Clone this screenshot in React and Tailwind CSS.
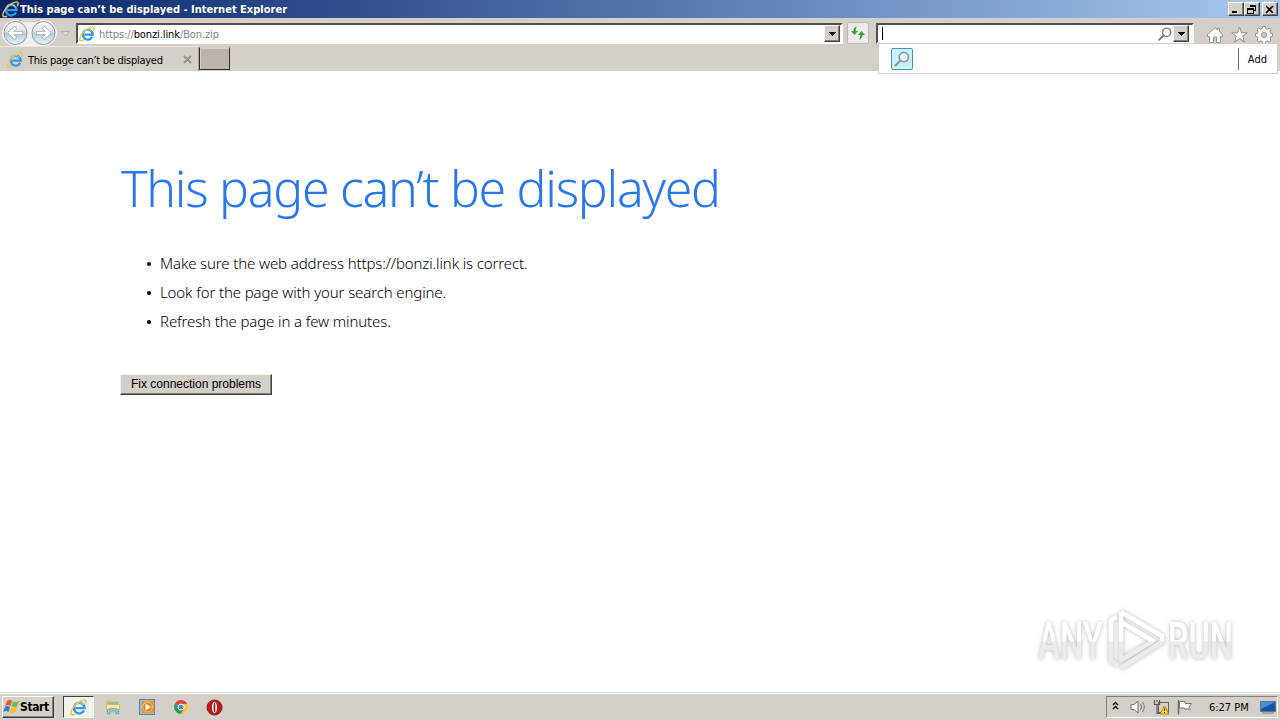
import React from "react";

const UI_FONT = "font-['DejaVu_Sans_Condensed','DejaVu_Sans',sans-serif]";

const IeLogo = ({ size = 16 }) => (
  <svg width={size} height={size} viewBox="0 0 16 16" fill="none" className="shrink-0">
    <path d="M13.200 10.800A5 5 0 1 1 13.700 8.600H5.200" stroke="#2c9be3" strokeWidth="2.300" />
    <path d="M4.400 5.200A5.500 5.500 0 0 1 12.800 5.500" stroke="#86d7fb" strokeWidth="1" />
    <path d="M4.800 13.900C2.800 15.300 1 15.200.8 13.500C.5 10.500 4.200 5.700 8.400 3C11.500 1 14.400.3 15 1.600C15.400 2.400 15 3.600 14.300 4.800" stroke="#efc33c" strokeWidth="1.400" />
  </svg>
);

const Magnifier = ({ size = 14, color = "#858585", fill = "none" }) => (
  <svg width={size} height={size} viewBox="0 0 14 14" fill="none" className="shrink-0">
    <path d="M5.500 8.500L1.300 12.700" stroke={color} strokeWidth="2" strokeLinecap="round" />
    <circle cx="8.600" cy="5.300" r="4.100" fill={fill} stroke={color} strokeWidth="1.500" />
  </svg>
);

const Arrow = () => (
  <svg width="8" height="4" viewBox="0 0 8 4" shapeRendering="crispEdges">
    <path d="M0 0H8L4 4Z" fill="#000" />
  </svg>
);

const DropButton = () => (
  <div className="flex h-[17px] w-4 shrink-0 items-center justify-center border border-t-[#f4f2ee] border-r-[#404040] border-b-[#404040] border-l-[#f4f2ee] bg-[#d4d0c8] shadow-[inset_-1px_-1px_0_#808080]">
    <Arrow />
  </div>
);

const WindowButton = ({ children, className = "" }) => (
  <div className={`flex h-[14px] w-4 items-center justify-center border border-t-white border-r-[#404040] border-b-[#404040] border-l-white bg-[#d4d0c8] shadow-[inset_-1px_-1px_0_#808080] ${className}`}>
    <svg width="12" height="11" viewBox="0 0 12 11" fill="none" stroke="#000" shapeRendering="crispEdges" className="shrink-0">
      {children}
    </svg>
  </div>
);

const NavButtons = () => (
  <svg width="74" height="27" viewBox="0 0 74 27" fill="none" className="shrink-0">
    <defs>
      <linearGradient id="orb" x1="0" y1="0" x2="0" y2="1">
        <stop offset="0" stopColor="#fafcfd" />
        <stop offset=".46" stopColor="#dde1e6" />
        <stop offset=".5" stopColor="#b9c5cf" />
        <stop offset="1" stopColor="#e4fbff" />
      </linearGradient>
    </defs>
    <rect x="2.500" y="1.500" width="54" height="25" rx="12.500" fill="#f1efed" stroke="#faf9f8" />
    <path d="M19 1.500C25 2.500 34 2.500 40 1.500" stroke="#b5b1ae" />
    <circle cx="15.500" cy="14" r="11.500" fill="url(#orb)" stroke="#8f9aa5" />
    <circle cx="43.500" cy="14" r="11.500" fill="url(#orb)" stroke="#8f9aa5" />
    <g strokeLinecap="square">
      <path d="M10 14H21M14.500 9.500L10 14L14.500 18.500" stroke="#9ba9b6" strokeWidth="3.800" />
      <path d="M10 14H21M14.500 9.500L10 14L14.500 18.500" stroke="#fff" strokeWidth="2.600" />
      <path d="M38 14H49M44.500 9.500L49 14L44.500 18.500" stroke="#9ba9b6" strokeWidth="3.800" />
      <path d="M38 14H49M44.500 9.500L49 14L44.500 18.500" stroke="#fff" strokeWidth="2.600" />
    </g>
    <path d="M61.500 12.500H69.500L65.500 17Z" fill="#e0dcd8" stroke="#b5afab" />
  </svg>
);

const CommandIcons = () => (
  <svg width="72" height="20" viewBox="0 0 72 20" fill="#fff" stroke="#928e8b" className="ml-[11px] mt-[6px] shrink-0">
    <path d="M4.500 18.500V12.500H2.500V10.500L10 3.700L12.500 6V4.500H14.500V8L17.500 10.500V12.500H15.500V18.500H11.500V13H8.500V18.500Z" />
    <path d="M34.500 3L36.500 8.800H42.200L37.700 12.200L39.500 18L34.500 14.600L29.500 18L31.300 12.200L26.800 8.800H32.500Z" />
    <path transform="translate(-1 -.5)" d="M58.700 3H61.300L61.800 5L63.500 5.700L65.300 4.600L67 6.300L65.900 8.100L66.600 9.700L68.500 10.200V12.800L66.600 13.300L65.900 15L67 16.800L65.300 18.400L63.500 17.300L61.800 18L61.300 20H58.700L58.200 18L56.500 17.300L54.700 18.400L53 16.700L54.100 15L53.400 13.300L51.500 12.800V10.200L53.400 9.700L54.100 8L53 6.200L54.700 4.600L56.500 5.700L58.200 5Z" />
    <circle cx="59" cy="11" r="2.500" fill="#d4cfc9" />
  </svg>
);

const TitleBar = () => (
  <div className="flex h-[18px] items-center bg-linear-to-r from-[#0a246a] to-[#a6caf0] pl-[2px] pr-[2px]">
    <IeLogo size={17} />
    <span className="ml-px grow whitespace-nowrap pt-[2px] text-[11px] font-bold leading-[16px] tracking-[0.01px] text-white [font-stretch:condensed]">
      This page can’t be displayed - Internet Explorer
    </span>
    <WindowButton><path d="M2 8H7" strokeWidth="2" /></WindowButton>
    <WindowButton>
      <path d="M4.500 2V1.500H9.500V6.500H8M4 2H10M1.500 4.500H7.500V9.500H1.500ZM1 5H8" />
    </WindowButton>
    <WindowButton className="ml-[2px]">
      <path d="M2 2L9 9M9 2L2 9" strokeWidth="1.700" shapeRendering="auto" />
    </WindowButton>
  </div>
);

const AddressRow = () => (
  <div className="flex h-[28px] items-start">
    <div className="pt-[1px]"><NavButtons /></div>
    <div className="ml-[2px] mt-[5px] flex h-[21px] w-[767px] items-center border-2 border-t-[#55504c] border-r-white border-b-white border-l-[#55504c] bg-white">
      <div className="ml-px"><IeLogo size={16} /></div>
      <span className="ml-[4px] grow whitespace-nowrap pt-px text-[11px] leading-none tracking-[-0.1px] text-[#858585] [font-stretch:condensed]">
        https://<span className="text-black">bonzi.link</span>/Bon.zip
      </span>
      <DropButton />
      <div className="w-px" />
    </div>
    <div className="ml-[4px] mt-[4px] flex h-[22px] w-[22px] items-center justify-center rounded-xs border border-[#bdb9b5] bg-[#eeeae9]">
      <svg width="16" height="16" viewBox="0 0 16 16" className="shrink-0" fill="#37a23c">
        <path d="M7.500 1.500C6 2 5.800 3.500 5.800 6H8L4.500 10L1 6H3.500C3.500 3.200 5 1.500 7.500 1.500Z" />
        <path d="M8.500 14.500C10 14 10.200 12.500 10.200 10H8L11.500 6L15 10H12.500C12.500 12.800 11 14.500 8.500 14.500Z" />
      </svg>
    </div>
    <div className="ml-[7px] mt-[5px] flex h-[21px] w-[318px] items-center border-2 border-t-[#55504c] border-r-white border-b-white border-l-[#55504c] bg-white">
      <div className="ml-1 h-[13px] w-px bg-black" />
      <div className="grow" />
      <Magnifier size={14} />
      <div className="ml-px mr-[3px]"><DropButton /></div>
    </div>
    <CommandIcons />
  </div>
);

const TabRow = () => (
  <div className="flex h-[25px] items-start">
    <div className="flex h-[25px] w-[199px] items-center border-t border-r border-t-[#e9e5e1] border-r-[#a7a19d] pl-[7px] pt-px">
      <IeLogo size={16} />
      <span className="ml-[5px] whitespace-nowrap pt-[2px] text-[11px] leading-none tracking-[-0.27px] text-black [font-stretch:condensed]">
        This page can’t be displayed
      </span>
      <svg width="9" height="9" viewBox="0 0 9 9" className="ml-auto mr-[6px]" stroke="#98928e" strokeWidth="1.900">
        <path d="M1 1L8 8M8 1L1 8" />
      </svg>
    </div>
    <div className="mt-px h-[23px] w-[31px] border border-t-[#d4cfc9] border-r-[#302c2a] border-b-[#302c2a] border-l-[#302c2a] bg-[#bbb3ae] shadow-[inset_1px_1px_0_#d6d0cc]" />
  </div>
);

const SearchPopup = () => (
  <div className="absolute left-[878px] top-[43px] flex h-[31px] w-[400px] items-center border border-[#d1cecb] bg-white">
    <div className="ml-3 flex h-[22px] w-[22px] items-center justify-center rounded-xs border border-[#3a9dbd] bg-[#cdf1fc]">
      <Magnifier size={16} color="#8c9aaa" fill="#e3f8ff" />
    </div>
    <div className="ml-auto h-[22px] w-px bg-[#6f6f6f]" />
    <span className="ml-[9px] mr-[10px] pt-[2px] text-[11px] leading-none text-black [font-stretch:condensed]">Add</span>
  </div>
);

const tips = [
  "Make sure the web address https://bonzi.link is correct.",
  "Look for the page with your search engine.",
  "Refresh the page in a few minutes.",
];

const ErrorPage = () => (
  <main className="h-[621px] bg-white pl-[120px] pt-[83px] font-['Noto_Sans','Open_Sans',sans-serif] font-light [font-stretch:normal]">
    <h1 className="whitespace-nowrap pl-px text-[50px] leading-[68px] tracking-[-1.27px] text-[#2778ec]">
      This page can’t be displayed
    </h1>
    <ul className="mt-[27px] text-[15px] leading-[29px] tracking-[-0.12px] text-black">
      {tips.map((tip) => (
        <li key={tip} className="flex items-center whitespace-nowrap pl-[27px]">
          <span className="mr-[9px] h-1 w-1 rounded-full bg-black" />
          {tip}
        </li>
      ))}
    </ul>
    <button className="mt-[38px] block h-[21px] w-[152px] border border-t-[#f4f2ee] border-r-[#404040] border-b-[#404040] border-l-[#f4f2ee] bg-[#d4d0c8] pb-px font-['Liberation_Sans',sans-serif] text-[12px] font-normal leading-none text-black shadow-[inset_-1px_-1px_0_#808080]">
      Fix connection problems
    </button>
  </main>
);

const Watermark = () => (
  <svg
    width="206"
    height="74"
    viewBox="-4 -4 206 74"
    className="absolute left-[1033px] top-[603px] overflow-visible drop-shadow-[0_0_2px_rgba(0,0,0,0.28)]"
  >
    <defs>
      <linearGradient id="mark" gradientUnits="userSpaceOnUse" x1="0" y1="0" x2="0" y2="66">
        <stop offset=".51" stopColor="#ffffff" />
        <stop offset=".53" stopColor="#ececec" />
      </linearGradient>
    </defs>
    <g fill="url(#mark)" fontFamily="Roboto" fontSize="51" fontWeight="500">
      <text x="1" y="52" textLength="65" lengthAdjust="spacingAndGlyphs">ANY</text>
      <text x="131" y="52" textLength="65" lengthAdjust="spacingAndGlyphs">RUN</text>
    </g>
    <g fill="none" stroke="url(#mark)" strokeWidth="4.500" strokeLinejoin="round">
      <path d="M80 10L74 13V54L81 58" />
      <path d="M84 5V53L116 34L84 15" />
      <path d="M84 5L125 29V35L84 61" />
    </g>
  </svg>
);

const Taskbar = () => (
  <footer className="flex h-7 items-center border-t border-[#d4d0c8] bg-[#d4cfc9] shadow-[inset_0_1px_0_#fff]">
    <div className="ml-[2px] mt-[1px] flex h-[22px] w-[52px] items-center border border-t-white border-r-[#404040] border-b-[#404040] border-l-white shadow-[inset_-1px_-1px_0_#808080]">
      <svg width="17" height="16" viewBox="0 0 17 16" className="shrink-0">
        <path d="M4 2Q7 0 9 2L7.500 7Q5 5 2 7Z" fill="#e95b26" />
        <path d="M10 2.500Q13 4 16 2L14 7.500Q11 9 8.500 7Z" fill="#79b843" />
        <path d="M2 8Q5 6 7 8L5.500 13Q3 11 0 13Z" fill="#3979c9" />
        <path d="M8 8.500Q11 10 14 8L12.500 13Q9 15 6.500 13Z" fill="#f7bd27" />
      </svg>
      <span className="text-[12px] font-bold leading-none tracking-[-0.4px] text-black [font-stretch:condensed]">Start</span>
    </div>
    <div className="ml-[9px] mt-[1px] flex h-[22px] w-[31px] items-center justify-center border border-t-[#404040] border-r-white border-b-white border-l-[#404040] bg-[#f4f2ef]">
      <IeLogo size={17} />
    </div>
    <svg width="18" height="18" viewBox="0 0 18 18" className="ml-[10px] mt-[1px]">
      <path d="M2 2.500L6 1.500L8 3.500H15V8H2Z" fill="#e5c364" />
      <rect x="4" y="4" width="10" height="4" fill="#8dc394" />
      <path d="M2.500 6.500H15.500V14H2.500Z" fill="#f7e5a1" stroke="#dabc68" />
      <path d="M3.500 16V11.500Q9 9 14.500 11.500V16H12V13H6V16Z" fill="#8fcaea" stroke="#559bbd" strokeWidth=".7" />
    </svg>
    <svg width="17" height="17" viewBox="0 0 17 17" className="ml-[17px] mt-[1px]">
      <rect x=".5" y=".5" width="15" height="15" fill="#8dbce2" stroke="#5c86ac" />
      <rect x="3" y="2" width="12" height="12" fill="#f39a22" />
      <circle cx="8.500" cy="8" r="4.800" fill="#ed7e12" stroke="#ffc56a" />
      <path d="M6.500 4.500L12 8L6.500 11.500Z" fill="#fff" />
    </svg>
    <svg width="14" height="14" viewBox="0 0 14 14" className="ml-[18px] mt-[1px]">
      <path d="M7 7L1 3.500A7 7 0 0 1 13 3.500Z" fill="#df4633" />
      <path d="M7 7L1 3.500A7 7 0 0 0 7 14L10 9Z" fill="#2da052" />
      <path d="M7 4H13.300A7 7 0 0 1 7 14L10 9Z" fill="#f6c934" />
      <circle cx="7" cy="7" r="3" fill="#4c8ce4" stroke="#fff" />
    </svg>
    <svg width="17" height="17" viewBox="0 0 17 17" className="ml-[18px] mt-[1px]">
      <circle cx="8.500" cy="8.500" r="7.500" fill="#c0161c" stroke="#8a1a1d" />
      <ellipse cx="8.500" cy="8.500" rx="2.600" ry="5.500" fill="#f5f0ee" />
      <ellipse cx="8.500" cy="8.500" rx=".8" ry="4.800" fill="#8d1418" />
    </svg>
    <div className="ml-auto mr-[2px] mt-[1px] flex h-[22px] w-[172px] items-center border border-t-[#85807c] border-r-white border-b-white border-l-[#85807c]">
      <svg width="7" height="9" viewBox="0 0 7 9" fill="none" stroke="#000" strokeWidth="1.300" className="mb-[3px] ml-[5px]">
        <path d="M1 4L3.500 1.500L6 4M1 8L3.500 5.500L6 8" />
      </svg>
      <svg width="17" height="16" viewBox="0 0 17 16" fill="none" stroke="#797572" className="ml-[11px]">
        <path d="M1 5.500H4L8 2V14L4 10.500H1Z" fill="#f6f5f3" />
        <path d="M10.500 5Q12.500 8 10.500 11M12.500 3Q16 8 12.500 13" />
      </svg>
      <svg width="17" height="17" viewBox="0 0 17 17" fill="none" className="ml-[6px]">
        <rect x="5.500" y="3.500" width="10" height="10" fill="#d1d0ca" stroke="#67635e" />
        <path d="M1.500 1V5.500H6.500V1M4 5V14.500H8M4 1V3" stroke="#5c5852" strokeWidth="1.200" />
        <path d="M11.500 7L16 15H7Z" fill="#ffdd22" stroke="#ad8310" />
        <path d="M11.500 9.500V12M11.500 13V14" stroke="#302b18" />
      </svg>
      <svg width="18" height="17" viewBox="0 0 18 17" className="ml-[6px]">
        <path d="M2.500 1V15.500" stroke="#6f6b67" strokeWidth="1.500" />
        <path d="M3.500 2.500H9V4.500H15.500L13 8.500L14.500 10H8.500V9H3.500Z" fill="#fff" stroke="#787470" />
      </svg>
      <span className="ml-[15px] whitespace-nowrap text-[11px] leading-none tracking-[-0.03px] text-black [font-stretch:condensed]">6:27 PM</span>
      <svg width="16" height="14" viewBox="0 0 16 14" className="ml-auto mr-[1px]">
        <path d="M.5 1.500H15.500V11.500H.5Z" fill="#1855a8" stroke="#667484" />
        <path d="M1 2H15L1 9Z" fill="#4590de" />
        <path d="M2 13H14" stroke="#777" />
      </svg>
    </div>
  </footer>
);

export default function App() {
  return (
    <div className={`relative h-[720px] w-[1280px] overflow-hidden bg-[#d4cfc9] ${UI_FONT}`}>
      <TitleBar />
      <AddressRow />
      <TabRow />
      <ErrorPage />
      <Taskbar />
      <SearchPopup />
      <Watermark />
    </div>
  );
}
